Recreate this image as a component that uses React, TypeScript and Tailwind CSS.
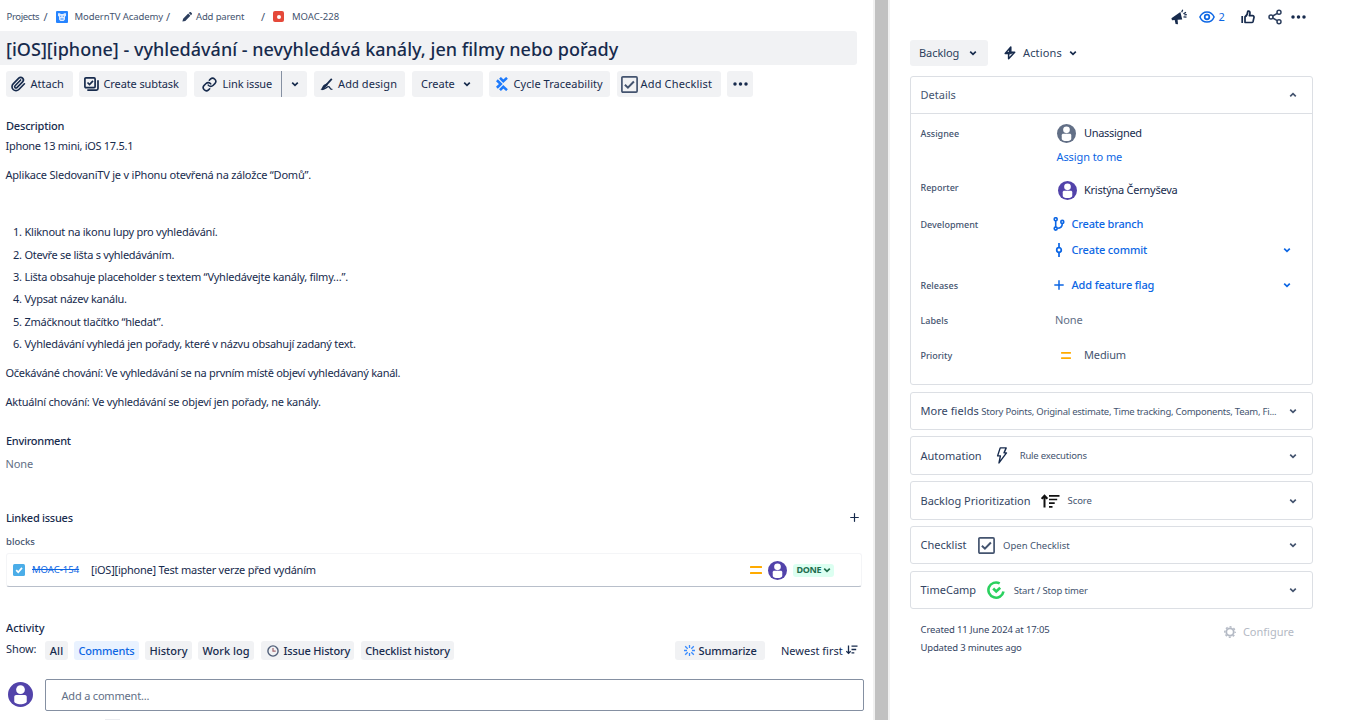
import type { ReactNode } from "react";
import { Link, Paperclip, Plus, Share2 } from "lucide-react";

type Kids = { children?: ReactNode; className?: string };

const Chevron = ({ className = "", up = false }: { className?: string; up?: boolean }) => (
  <svg viewBox="0 0 8 8" className={`size-2 shrink-0 ${className}`} fill="none" stroke="currentColor" strokeWidth="1.7">
    <path d={up ? "M1.2 5.3 4 2.6l2.8 2.7" : "M1.2 2.6 4 5.3l2.8-2.7"} />
  </svg>
);

const Dots = () => (
  <svg viewBox="0 0 15 4" className="h-1 w-[15px] shrink-0" fill="currentColor">
    <circle cx="2" cy="2" r="1.75" />
    <circle cx="7.5" cy="2" r="1.75" />
    <circle cx="13" cy="2" r="1.75" />
  </svg>
);

const Avatar = ({ className = "" }: { className?: string }) => (
  <svg viewBox="0 0 24 24" className={`shrink-0 ${className}`}>
    <circle cx="12" cy="12" r="12" fill="currentColor" />
    <circle cx="12" cy="7.4" r="4.2" fill="#fff" />
    <path d="M6 14.200c0-1 .8-1.800 1.800-1.800h8.400c1 0 1.800.8 1.800 1.800v4.600c0 1.300-2.700 2.600-6 2.600s-6-1.300-6-2.600z" fill="#fff" />
  </svg>
);

const Medium = ({ className = "" }: { className?: string }) => (
  <svg viewBox="0 0 12 8" className={`shrink-0 ${className}`} preserveAspectRatio="none" fill="#ffab00">
    <rect width="12" height="2" rx=".5" />
    <rect y="6" width="12" height="2" rx=".5" />
  </svg>
);

const CheckBox = ({ className = "" }: { className?: string }) => (
  <svg viewBox="0 0 17 17" className={`size-[17px] shrink-0 text-[#44546f] ${className}`} fill="none" stroke="currentColor">
    <rect x=".9" y=".9" width="15.2" height="15.2" rx="1" strokeWidth="1.7" />
    <path d="m3.9 8.8 3 2.9 6-6.2" strokeWidth="2" />
  </svg>
);

const Btn = ({ children, className = "" }: Kids) => (
  <button className={`flex h-[26px] items-center rounded-[3px] text-left whitespace-nowrap ${className}`}>{children}</button>
);

const Chip = ({ children, className = "" }: Kids) => (
  <button className={`flex h-[19px] items-center rounded-[3px] pt-px font-medium whitespace-nowrap ${className}`}>{children}</button>
);

const Line = ({ children, className = "" }: Kids) => (
  <div className={`flex h-5 items-center whitespace-nowrap ${className}`}>{children}</div>
);

const steps: [string, string][] = [
  ["Kliknout na ikonu lupy pro vyhledávání.", "tracking-[-0.25px]"],
  ["Otevře se lišta s vyhledáváním.", "tracking-[-0.29px]"],
  ["Lišta obsahuje placeholder s textem “Vyhledávejte kanály, filmy…”.", "tracking-[-0.26px]"],
  ["Vypsat název kanálu.", "tracking-[-0.26px]"],
  ["Zmáčknout tlačítko “hledat”.", "tracking-[-0.235px]"],
  ["Vyhledávání vyhledá jen pořady, které v názvu obsahují zadaný text.", "tracking-[-0.265px]"],
];

function Breadcrumbs() {
  return (
    <nav className="flex h-[33px] items-center pl-[6.5px] text-[9.5px] text-[#44546f]">
      <span className="w-[37px] tracking-[-0.35px]">Projects</span>
      <span className="w-[12px] text-[11px]">/</span>
      <svg viewBox="0 0 12 12" className="size-3">
        <rect width="12" height="12" rx="1" fill="#2684ff" />
        <path d="M2 2.2h2L4.7 3h2.6L8 2.2h2V5L9 5.6v3L7.6 10H4.4L3 8.6V5.6L2 5z" fill="#deebff" />
        <path d="M4.2 4.7h1v1h-1zM6.800 4.700h1v1h-1zM4.500 7.500h3v1h-3z" fill="#2684ff" />
      </svg>
      <span className="ml-[7px] w-[91.5px] tracking-[-0.07px]">ModernTV Academy</span>
      <span className="w-[16px] text-[11px]">/</span>
      <svg viewBox="0 0 10 10" className="size-2.5 text-[#2c3e5d]" fill="currentColor">
        <path d="M.4 9.600 1.100 6.700 6.200 1.600 8.400 3.800 3.300 8.900zM6.800 1 7.600.3c.5-.4 1-.3 1.300 0l.8.8c.4.4.4.9 0 1.300L9 3.200z" />
      </svg>
      <span className="ml-1 w-[65px] tracking-[-0.15px]">Add parent</span>
      <span className="w-3 text-[11px]">/</span>
      <span className="flex size-[11px] items-center justify-center rounded-[2px] bg-[#e5493a]">
        <span className="size-[4px] rounded-full bg-white" />
      </span>
      <span className="ml-[8px]">MOAC-228</span>
    </nav>
  );
}

function Toolbar() {
  return (
    <div className="mt-1.5 flex h-[26px] pl-1.5">
      <Btn className="w-[67px] bg-[#f1f2f4] pl-[4px]">
        <Paperclip className="size-4" strokeWidth={2.500} />
        <span className="ml-[4.5px]">Attach</span>
      </Btn>
      <Btn className="ml-1.5 w-[108px] bg-[#f1f2f4] pl-[5px]">
        <svg viewBox="0 0 15 14" className="h-3.5 w-[15px]" fill="none" stroke="currentColor" strokeWidth="1.7">
          <rect x=".9" y=".9" width="10.2" height="9.7" rx="1" />
          <path d="m3.500 5.500 2 2L9 3.800M14 3.200v8.300c0 1-.6 1.600-1.600 1.600H3.300" />
        </svg>
        <span className="ml-[4.5px] tracking-[-0.11px]">Create subtask</span>
      </Btn>
      <Btn className="ml-[7px] w-[87px] rounded-r-none bg-[#f1f2f4] pl-2">
        <Link className="size-[15px]" strokeWidth={2.500} />
        <span className="ml-[5.500px] tracking-[-0.08px]">Link issue</span>
      </Btn>
      <Btn className="w-[26px] justify-center rounded-l-none border-l border-[#8590a2] bg-[#f1f2f4]">
        <Chevron />
      </Btn>
      <Btn className="ml-[7px] w-[91px] bg-[#f1f2f4] pl-1.5">
        <svg viewBox="0 0 13 13" className="size-[13px]" fill="none" stroke="currentColor" strokeWidth="1.500">
          <path d="M11.800.8 6.500 6.600" strokeWidth="1.800" />
          <path d="M6.700 5.400 7.900 7.100 5.400 9.200C4.300 10.800 2.500 11.800.4 12c1.200-1 1.400-2.500 2.200-3.600C3.600 6.700 5.200 5.800 6.700 5.400z" fill="currentColor" stroke="none" />
          <path d="M1.800 11.700c3.200-.4 5.200-3.200 7-3 1.600.2.300 2.900 3.600 2.700" strokeWidth="1.300" />
        </svg>
        <span className="ml-[5px] tracking-[0.1px]">Add design</span>
      </Btn>
      <Btn className="ml-[7px] w-[71px] bg-[#f1f2f4] pl-[9px]">
        <span className="w-[41.500px]">Create</span>
        <Chevron />
      </Btn>
      <Btn className="ml-1.5 w-[121px] bg-[#f1f2f4] pl-[7px]">
        <svg viewBox="0 0 12 14" className="h-3.5 w-3" fill="none" stroke="#1d7afc" strokeWidth="2.600">
          <path d="M4 .9 7.300 4.200 11 .9M.9 3.300 4.800 7 .9 10.700M4 13.100 7.300 9.800 11 13.100" />
        </svg>
        <span className="ml-[5.500px] tracking-[0.05px]">Cycle Traceability</span>
      </Btn>
      <Btn className="ml-[7px] w-[104px] bg-[#f1f2f4] pl-1">
        <CheckBox />
        <span className="ml-[2.500px] tracking-[0.17px]">Add Checklist</span>
      </Btn>
      <Btn className="ml-1.5 w-[26px] justify-center bg-[#f1f2f4]">
        <Dots />
      </Btn>
    </div>
  );
}

function Issue() {
  return (
    <main className="flex h-full w-[873px] shrink-0 flex-col">
      <Breadcrumbs />
      <h1 className="mt-[-2px] flex h-[34px] w-[857px] items-center rounded-r-[3px] bg-[#f1f2f4] pt-px pl-[6px] text-[18px] font-medium tracking-[0.02px] whitespace-nowrap">
        [iOS][iphone] - vyhledávání - nevyhledává kanály, jen filmy nebo pořady
      </h1>
      <Toolbar />

      <section className="mt-[19px] pl-[5.500px]">
        <Line className="pl-[0.500px] font-medium tracking-[-0.19px]">Description</Line>
        <Line className="tracking-[-0.29px]">Iphone 13 mini, iOS 17.5.1</Line>
        <Line className="mt-[9px] tracking-[-0.21px]">Aplikace SledovaniTV je v iPhonu otevřená na záložce “Domů”.</Line>
        <ol className="mt-[36px] mb-[7.600px]">
          {steps.map(([text, tracking], i) => (
            <li key={text} className="flex h-[22.400px] items-center whitespace-nowrap">
              <span className="w-[19px] pl-[7.500px] tracking-[-0.3px]">{i + 1}.</span>
              <span className={tracking}>{text}</span>
            </li>
          ))}
        </ol>
        <Line className="tracking-[-0.295px]">Očekáváné chování: Ve vyhledávání se na prvním místě objeví vyhledávaný kanál.</Line>
        <Line className="mt-[9px] tracking-[-0.237px]">Aktuální chování: Ve vyhledávání se objeví jen pořady, ne kanály.</Line>
        <Line className="mt-[19px] pl-[0.500px] font-medium tracking-[-0.27px]">Environment</Line>
        <Line className="mt-[3px] tracking-[-0.1px] text-[#626f86]">None</Line>
      </section>

      <section className="mt-[34px] pl-1.5">
        <Line className="justify-between pr-[12px] font-medium tracking-[-0.26px]">
          Linked issues
          <Plus className="size-[13px]" strokeWidth={2.200} />
        </Line>
        <Line className="mt-1 text-[9.500px] font-medium text-[#44546f]">blocks</Line>
        <div className="mt-px flex h-[34px] w-[856px] items-center rounded-[3px] border-x border-t border-b border-[#f4f5f7] border-b-[#b8bfca] pt-px pl-1.5">
          <svg viewBox="0 0 12 12" className="size-3" fill="none">
            <rect width="12" height="12" rx="1.500" fill="#4bade8" />
            <path d="m3.200 6.200 2 2 3.800-4.300" stroke="#fff" strokeWidth="1.700" />
          </svg>
          <span className="ml-[7px] w-[59px] text-[9.500px] text-[#0c66e4] line-through">MOAC-154</span>
          <span className="w-[659px] tracking-[-0.24px]">[iOS][iphone] Test master verze před vydáním</span>
          <Medium className="h-2 w-3" />
          <Avatar className="ml-1.5 size-[19px] text-[#5243aa]" />
          <span className="ml-1.5 flex h-[13px] w-[41px] items-center rounded-[3px] bg-[#dcfff1] pl-[3.500px] text-[9px] font-bold tracking-[-0.35px] text-[#216e4e]">
            DONE
            <Chevron className="ml-[1.500px]" />
          </span>
        </div>
      </section>

      <section className="mt-[31px] pl-1.5">
        <Line className="font-medium">Activity</Line>
        <div className="mt-[3px] flex h-[19px] items-center whitespace-nowrap">
          <span className="w-[39px] pb-0.5 tracking-[-0.1px]">Show:</span>
          <Chip className="w-[23px] justify-center bg-[#f1f2f4] tracking-[0.2px]">All</Chip>
          <Chip className="ml-1.5 w-[65px] justify-center bg-[#e9f2ff] tracking-[-0.14px] text-[#0c66e4]">Comments</Chip>
          <Chip className="ml-1.5 w-[47px] justify-center bg-[#f1f2f4]">History</Chip>
          <Chip className="ml-1.5 w-[56px] justify-center bg-[#f1f2f4]">Work log</Chip>
          <Chip className="ml-[7px] w-[93px] bg-[#f1f2f4]">
            <svg viewBox="0 0 12 12" className="ml-1.5 size-3" fill="none">
              <circle cx="6" cy="6" r="5.100" stroke="#505f79" strokeWidth="1.400" />
              <path d="M6 3v3.200h2.700" stroke="#a4646c" strokeWidth="1.200" />
            </svg>
            <span className="ml-[4.500px] tracking-[-0.15px]">Issue History</span>
          </Chip>
          <Chip className="ml-[7px] w-[93px] justify-center bg-[#f1f2f4] tracking-[-0.12px]">Checklist history</Chip>
          <Chip className="ml-[221px] w-[90px] bg-[#f1f2f4] pl-[9px]">
            <svg viewBox="0 0 11 11" className="size-[11px]" stroke="#388bff" strokeWidth="1.300">
              <path d="M5.500 0v3M5.500 8v3M0 5.500h3M8 5.500h3M1.200 1.200l2.500 2.500M7.300 7.300l2.500 2.500M1.200 9.800l2.500-2.500M7.300 3.700l2.500-2.500" />
            </svg>
            <span className="ml-[3.500px] tracking-[-0.12px]">Summarize</span>
          </Chip>
          <span className="ml-4 pt-px">Newest first</span>
          <svg viewBox="0 0 12 10" className="ml-[3px] h-2.5 w-3" fill="none" stroke="currentColor" strokeWidth="1.300">
            <path d="M2.500.5v7.700M.3 6.200l2.200 2.200 2.200-2.200M5.500 1.200h6M5.500 4.500h4.700M5.500 7.800h2.800" />
          </svg>
        </div>
        <div className="mt-[19px] flex h-8 items-center">
          <Avatar className="ml-[2px] size-[25px] text-[#5243aa]" />
          <div className="ml-3 flex h-8 w-[819px] items-center rounded-[2px] border border-[#8590a2] pt-0.5 pl-[15.500px] tracking-[-0.19px] text-[#626f86]">
            Add a comment...
          </div>
        </div>
      </section>
      <div className="mt-2 ml-[105px] h-px w-[15px] shrink-0 bg-[#ebecf0]" />
    </main>
  );
}

const Label = ({ children, className = "w-[135px]" }: Kids) => (
  <span className={`shrink-0 text-[9px] font-medium text-[#44546f] ${className}`}>{children}</span>
);

const Panel = ({ title, titleClass = "", children, className = "" }: Kids & { title: string; titleClass?: string }) => (
  <div className={`flex items-center rounded-[3px] border border-[#dcdfe4] pr-[15px] pl-[9.500px] whitespace-nowrap text-[#44546f] ${className}`}>
    <span className={`text-[#344563] ${titleClass}`}>{title}</span>
    {children}
    <Chevron className="ml-auto" />
  </div>
);

function Details() {
  return (
    <div className="mt-2.5 h-[309px] rounded-[3px] border border-[#dcdfe4]">
      <div className="flex h-[37px] items-center justify-between border-b border-[#dcdfe4] pr-[15px] pl-[9.500px] text-[#44546f]">
        Details
        <Chevron up />
      </div>
      <div className="pr-[21px] pl-[9.500px]">
        <Line className="mt-[9px]">
          <Label className="w-[135px] pt-px">Assignee</Label>
          <Avatar className="ml-[1px] size-[19px] text-[#626f86]" />
          <span className="ml-[8.500px] tracking-[-0.32px]">Unassigned</span>
        </Line>
        <Line className="mt-1 pl-[136px] tracking-[-0.09px] text-[#0c66e4]">Assign to me</Line>
        <Line className="mt-[13px]">
          <Label className="w-[135px] pb-[5px]">Reporter</Label>
          <Avatar className="ml-[2px] size-[19px] text-[#5243aa]" />
          <span className="ml-[7.500px] tracking-[-0.25px]">Kristýna Černyševa</span>
        </Line>
        <Line className="mt-[14px] text-[#0c66e4]">
          <Label className="w-[132.500px] pt-px">Development</Label>
          <svg viewBox="0 0 12 14" className="h-3.5 w-3" fill="none" stroke="currentColor" strokeWidth="1.600">
            <circle cx="2.700" cy="2.200" r="1.500" />
            <circle cx="2.700" cy="11.600" r="1.500" />
            <circle cx="9.300" cy="4.900" r="1.500" />
            <path d="M2.700 3.700v6.400M9.300 6.400c0 3-1.500 4.800-5.100 4.900" />
          </svg>
          <span className="ml-[6.500px] font-medium tracking-[-0.19px]">Create branch</span>
        </Line>
        <Line className="mt-1.5 pl-[134.500px] text-[#0c66e4]">
          <svg viewBox="0 0 8 14" className="h-3.5 w-2" fill="none" stroke="currentColor" strokeWidth="1.700">
            <circle cx="4" cy="7" r="2.300" />
            <path d="M4 0v4.500M4 9.500V14" />
          </svg>
          <span className="ml-[8.500px] font-medium tracking-[-0.15px]">Create commit</span>
          <Chevron className="ml-auto" />
        </Line>
        <Line className="mt-[15px] text-[#0c66e4]">
          <Label className="w-[133.500px] pt-px">Releases</Label>
          <svg viewBox="0 0 10 10" className="size-2.5" stroke="currentColor" strokeWidth="1.500">
            <path d="M5 .3v9.400M.3 5h9.400" />
          </svg>
          <span className="ml-[7.500px] font-medium tracking-[-0.14px]">Add feature flag</span>
          <Chevron className="ml-auto" />
        </Line>
        <Line className="mt-[15px]">
          <Label className="w-[134.500px] pt-px">Labels</Label>
          <span className="tracking-[-0.1px] text-[#626f86]">None</span>
        </Line>
        <Line className="mt-[15px]">
          <Label className="w-[135px] pt-px">Priority</Label>
          <Medium className="ml-[5.500px] h-[7px] w-2.5" />
          <span className="ml-[13px] tracking-[-0.15px] text-[#44546f]">Medium</span>
        </Line>
      </div>
    </div>
  );
}

function Sidebar() {
  return (
    <aside className="flex h-full w-[423px] flex-col pl-5">
      <div className="flex h-[33px] items-center pl-[261px]">
        <svg viewBox="0 0 16 16" className="size-4 shrink-0" fill="currentColor">
          <path d="M.4 9.200 9.400 3 11.200 10.600 6.600 10.800 7 15.300 4.600 15 3.700 11 1 11.200z" />
          <path d="M10.700 3.300 11.700.8M12.400 4.800l2.600-1.400M12.500 7.800l3 .4M13.300 5.900l2.500-.3" stroke="currentColor" strokeWidth="1.200" />
        </svg>
        <svg viewBox="0 0 16 12" className="ml-[11.500px] h-3 w-4 shrink-0 text-[#0c66e4]" fill="none" stroke="currentColor" strokeWidth="1.500">
          <path d="M.9 6C2.300 2.700 4.900.9 8 .9s5.700 1.800 7.100 5.100C13.700 9.300 11.100 11.100 8 11.100S2.300 9.300.9 6z" />
          <circle cx="8" cy="6" r="2.300" strokeWidth="1.700" />
        </svg>
        <span className="ml-[4px] w-[22.500px] pt-px text-[11px] text-[#0c66e4]">2</span>
        <svg viewBox="0 0 14 14" className="size-3.5 shrink-0" fill="none" stroke="currentColor" strokeWidth="1.700" strokeLinejoin="round">
          <path d="M1.200 6v7" />
          <path d="M4 12.300V6.800C5.800 5.800 6.600 4 6.700 1.600c.1-.9 2.200-.8 2.300 1.200 0 1.100-.3 2-.6 2.900h3.200c1 0 1.600.8 1.400 1.700l-.9 4c-.2.700-.8 1.100-1.500 1.100z" />
        </svg>
        <Share2 className="mr-[8.500px] ml-[11.500px] size-4 shrink-0 text-[#2c3e5d]" strokeWidth={2.200} />
        <Dots />
      </div>
      <div className="mt-[7px] flex h-[26px]">
        <Btn className="w-[78px] bg-[#f1f2f4] pl-[9px] text-[#2c3e5d]">
          <span className="w-[49.500px] tracking-[-0.07px]">Backlog</span>
          <Chevron className="text-[#172b4d]" />
        </Btn>
        <Btn className="pl-4 text-[#2c3e5d]">
          <svg viewBox="0 0 12 14" className="h-3.5 w-3 text-[#172b4d]" fill="none" stroke="currentColor" strokeWidth="1.500" strokeLinejoin="round">
            <path d="M6.800 1 1.200 7.500h3.400v5.300L10.700 6.300H6.800z" />
            <path d="M6.200 2.500 5 7.800l1-.3 3-1M3 6.800 7.800 7" />
          </svg>
          <span className="ml-[7px] w-[46px] tracking-[0.15px]">Actions</span>
          <Chevron className="text-[#172b4d]" />
        </Btn>
      </div>
      <Details />
      <Panel title="More fields" titleClass="tracking-[0.05px]" className="mt-[7px] h-[38px]">
        <span className="ml-[2.500px] pt-px text-[9.500px] tracking-[-0.25px]">
          Story Points, Original estimate, Time tracking, Components, Team, Fi...
        </span>
      </Panel>
      <Panel title="Automation" className="mt-1.5 h-[39px]">
        <svg viewBox="0 0 12 17" className="ml-[14px] h-[17px] w-3 text-[#172b4d]" fill="none" stroke="currentColor" strokeWidth="1.400" strokeLinejoin="round">
          <path d="M4.200.9h6L8 5.900h2.500L3 15.900l1.400-7H1.600z" />
        </svg>
        <span className="ml-[12px] text-[9.500px] tracking-[-0.18px]">Rule executions</span>
      </Panel>
      <Panel title="Backlog Prioritization" className="mt-1.5 h-[39px]">
        <svg viewBox="0 0 19 14" className="ml-[10px] h-3.5 w-[19px] text-[#111]" fill="none" stroke="currentColor" strokeWidth="1.700">
          <path d="M3.500 13.500V2M.6 4.800l2.900-3 2.900 3" strokeWidth="2" />
          <path d="M8 1.800h10.500M8 5.500h8.200M8 9.200h5.700M8 12.800h3.500" />
        </svg>
        <span className="ml-[8px] text-[9.500px] tracking-[-0.1px]">Score</span>
      </Panel>
      <Panel title="Checklist" className="mt-1.5 h-[38px]">
        <CheckBox className="ml-[11px]" />
        <span className="ml-[8.500px] pt-px text-[9.500px]">Open Checklist</span>
      </Panel>
      <Panel title="TimeCamp" className="mt-[7px] h-[38px]">
        <svg viewBox="0 0 18 18" className="ml-[11px] size-[18px] text-[#2bd15f]" fill="none" stroke="currentColor" strokeWidth="2.600">
          <path d="M12.700 2.400A7.600 7.600 0 1 0 16.500 10.500" />
          <path d="m6.200 7.500 3 3 4-3.800" />
        </svg>
        <span className="ml-[8.500px] pt-px text-[9.500px] tracking-[-0.13px]">Start / Stop timer</span>
      </Panel>
      <div className="mt-3 flex justify-between pr-[19px] pl-[10.500px] whitespace-nowrap text-[#44546f]">
        <div className="text-[9.500px] text-[#344563]">
          <div className="flex h-[18px] items-center tracking-[-0.125px]">Created 11 June 2024 at 17:05</div>
          <div className="flex h-[18px] items-center tracking-[-0.17px]">Updated 3 minutes ago</div>
        </div>
        <div className="flex h-[22px] items-center text-[#b3b9c4]">
          <svg viewBox="0 0 12 12" className="size-3" fill="none" stroke="currentColor">
            <circle cx="6" cy="6" r="3.700" strokeWidth="1.800" />
            <circle cx="6" cy="6" r="5.200" strokeWidth="1.400" strokeDasharray="2.040 2.040" strokeDashoffset="1" />
          </svg>
          <span className="ml-[6.500px]">Configure</span>
        </div>
      </div>
    </aside>
  );
}

export default function App() {
  return (
    <div className="flex h-[720px] w-[1354px] overflow-hidden bg-white font-['Noto_Sans',sans-serif] text-[11px] leading-4 text-[#172b4d]">
      <Issue />
      <div className="h-full w-[17px] shrink-0 border-x-2 border-[#f1f1f1] bg-[#c1c1c1]" />
      <Sidebar />
    </div>
  );
}
